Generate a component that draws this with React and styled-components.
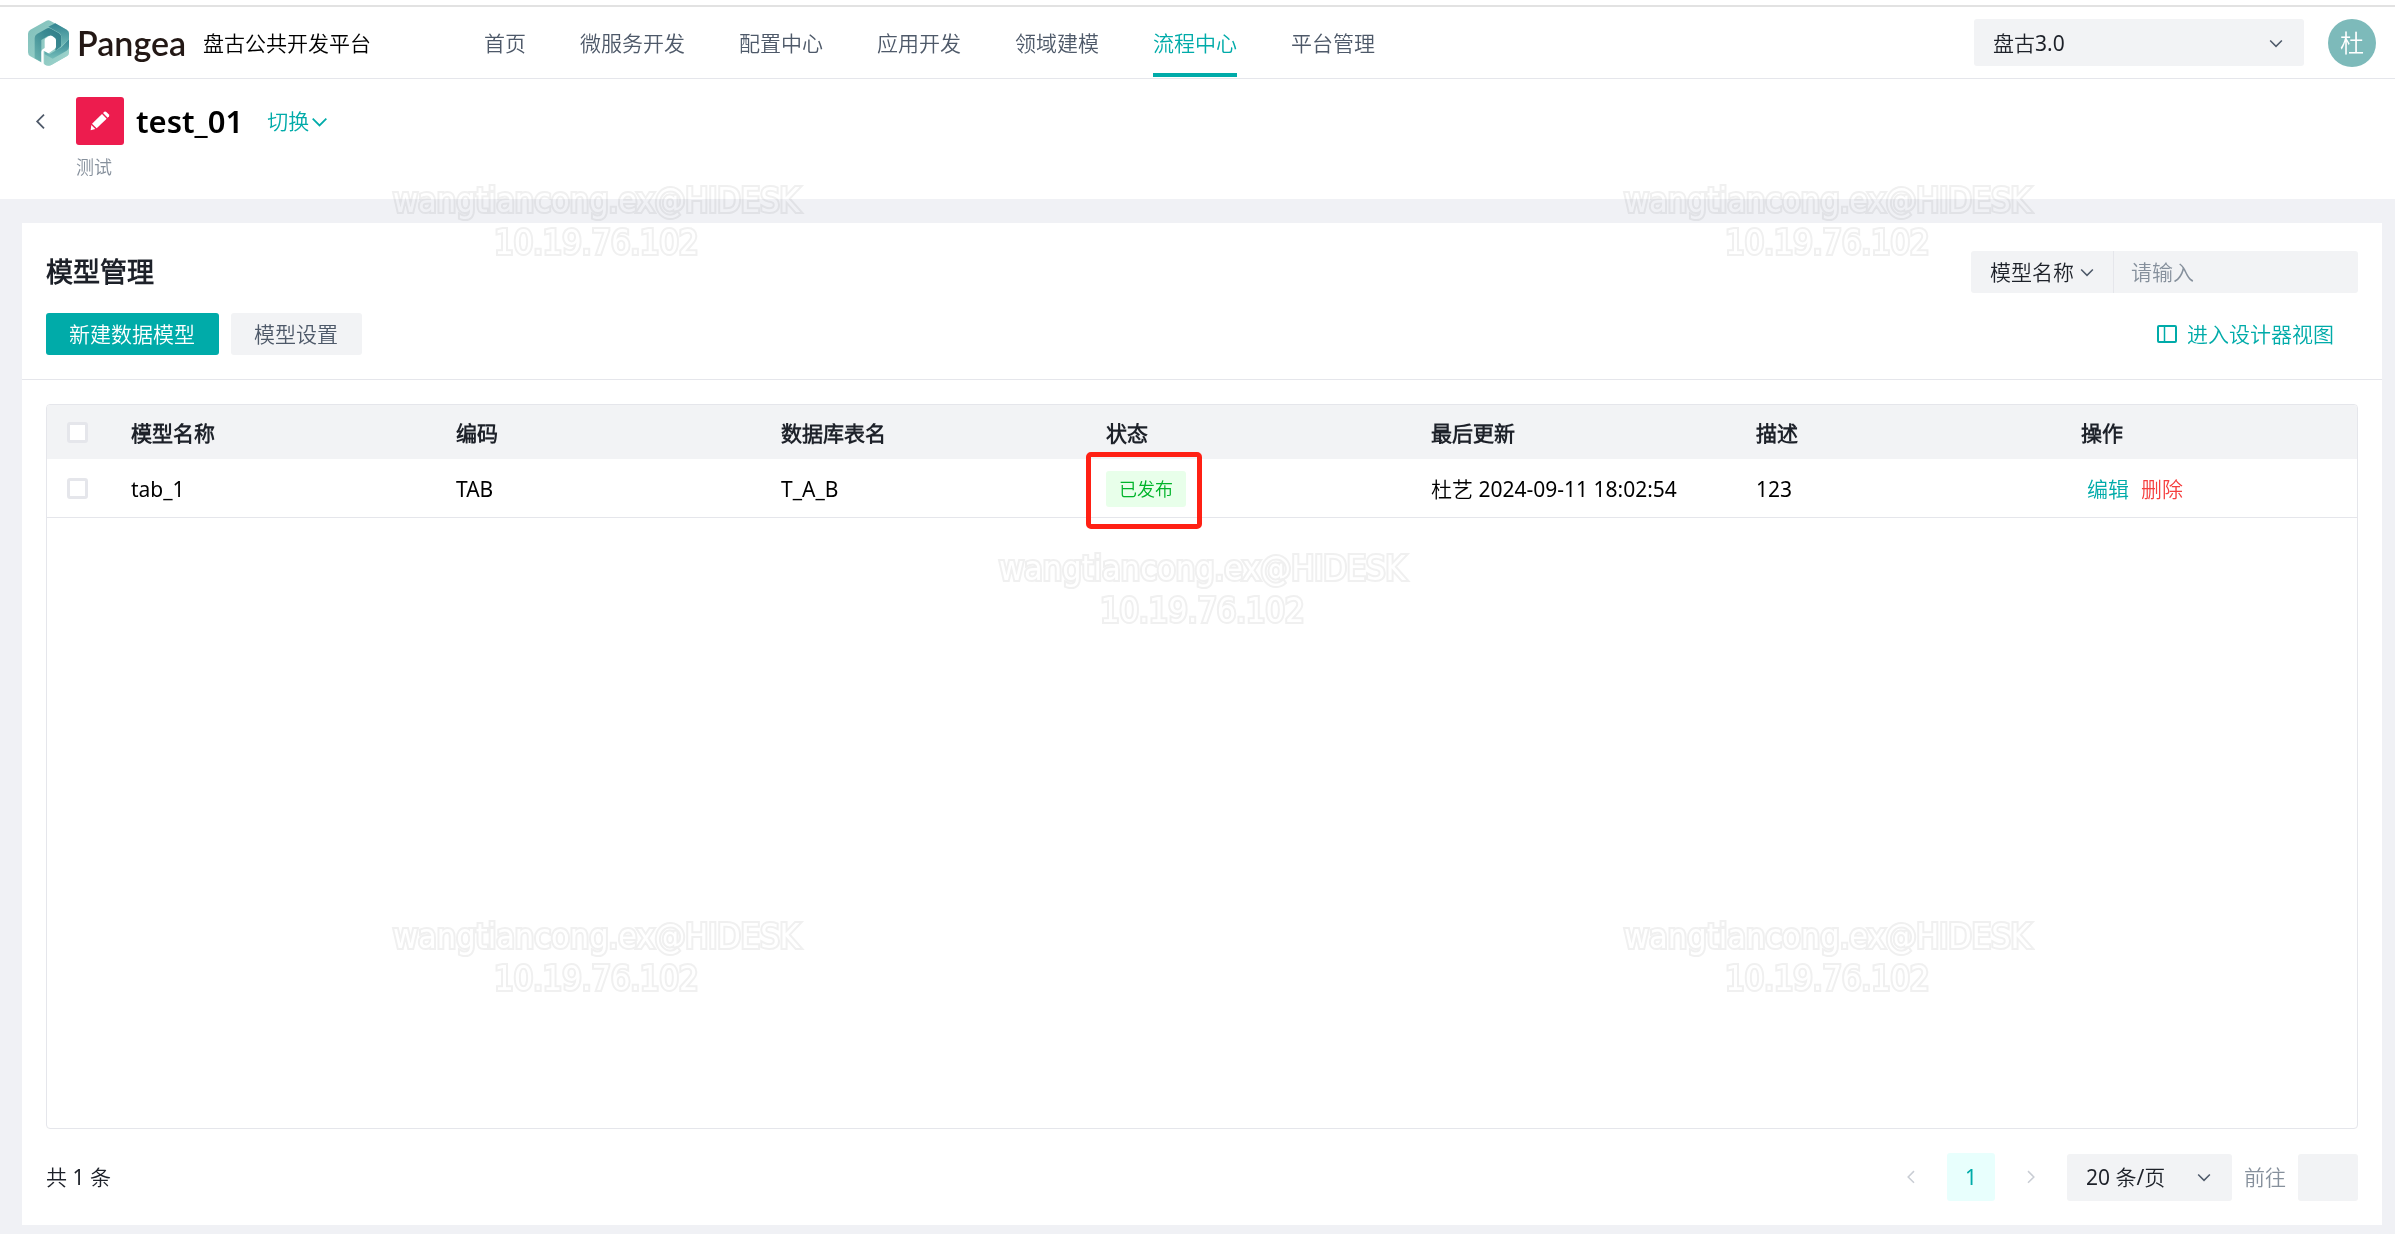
import React, { useState } from "react";
import styled, { createGlobalStyle } from "styled-components";

const colors = {
  primary: "#00aba9",
  primaryLight: "#e8fffd",
  danger: "#f53f3f",
  text: "#1d2129",
  textSecond: "#4e5969",
  textThird: "#86909c",
  disabled: "#c9cdd4",
  border: "#e5e6eb",
  fill: "#f2f3f5",
  page: "#f0f1f5"
};

const GlobalStyle = createGlobalStyle`
  * {
    box-sizing: border-box;
  }
  body {
    margin: 0;
    background: ${colors.page};
    color: ${colors.text};
    font-family: "Noto Sans", "Noto Sans CJK SC DemiLight", "Noto Sans CJK SC", sans-serif;
    font-size: 21px;
    line-height: 32px;
  }
  button, input, select {
    font: inherit;
    color: inherit;
    border: none;
    margin: 0;
  }
  a {
    text-decoration: none;
  }
`;

const navItems = [
  "首页",
  "微服务开发",
  "配置中心",
  "应用开发",
  "领域建模",
  "流程中心",
  "平台管理"
];

const columns = [
  "模型名称",
  "编码",
  "数据库表名",
  "状态",
  "最后更新",
  "描述",
  "操作"
];

const models = [
  {
    name: "tab_1",
    code: "TAB",
    table: "T_A_B",
    status: "已发布",
    updated: "杜艺 2024-09-11 18:02:54",
    desc: "123"
  }
];

const marks = [
  { left: "24.9%", top: 179 },
  { left: "76.3%", top: 179 },
  { left: "50.2%", top: 547 },
  { left: "24.9%", top: 915 },
  { left: "76.3%", top: 915 }
];

const paths = {
  down: "M39.6 17.443 24.043 33 8.487 17.443",
  left: "M32 8.4 16.444 23.956 32 39.513",
  right: "m16 39.513 15.556-15.557L16 8.4"
};

function Arrow({ to, size = 18, color = "currentColor" }) {
  return (
    <svg
      width={size}
      height={size}
      viewBox="0 0 48 48"
      fill="none"
      stroke={color}
      strokeWidth="4"
      aria-hidden="true"
    >
      <path d={paths[to]} />
    </svg>
  );
}

function LogoMark() {
  return (
    <svg width="41" height="46" viewBox="0 0 123 138" aria-hidden="true">
      <defs>
        <linearGradient id="band" x1="0" y1="1" x2="1" y2="0">
          <stop offset="0" stopColor="#6db5b1" />
          <stop offset="0.6" stopColor="#3b8a92" />
          <stop offset="1" stopColor="#2f7b87" />
        </linearGradient>
        <linearGradient id="side" x1="0" y1="0" x2="0" y2="1">
          <stop offset="0" stopColor="#338592" />
          <stop offset="1" stopColor="#74bdb9" />
        </linearGradient>
        <linearGradient id="face" x1="0" y1="0" x2="1" y2="1">
          <stop offset="0" stopColor="#7fbfba" />
          <stop offset="1" stopColor="#a5d8d0" />
        </linearGradient>
      </defs>
      <path
        d="M54 3q7-4 14 0l48 26q7 4 7 12v56q0 8-7 12l-46 26q-8 4-16 0L7 109q-7-4-7-12V41q0-8 7-12z"
        fill="url(#face)"
      />
      <path
        d="M20 54q0-8 7-12l28-16q7-4 14 0l24 14q7 4 7 12v30L82 92V60L61 47 40 60v66L20 115z"
        fill="url(#band)"
      />
      <path d="M82 10l34 19q7 4 7 12v18L100 82V50q0-7-6-11L61 20z" fill="url(#side)" />
      <path d="M123 58v39q0 8-7 12l-46 26q-10 4-20-1V98l14 8 18-12z" fill="url(#face)" />
      <path d="M123 58v22q0 8-7 12L74 116 50 103v-9l14 9 36-21z" fill="url(#side)" />
      <path d="M50 60q0-4 4-6l9-6q5-3 10 0l7 5q4 3 4 7v20q0 4-4 7L64 98q-4 2-8-1l-9-5v41l-7-4V96q0-5 4-8l6-4z" fill="#fff" />
    </svg>
  );
}

function PencilIcon() {
  return (
    <svg width="48" height="48" viewBox="0 0 144 144" fill="#fff" aria-hidden="true">
      <path d="M78 51l14 14-30 29-14-14z" />
      <path d="M46 84l12 12-14 4z" />
      <path d="M81 48l4-4q3-2 6 1l7 7q3 3 1 6l-4 4z" />
    </svg>
  );
}

function LayoutIcon() {
  return (
    <svg
      width="20"
      height="18"
      viewBox="0 0 20 18"
      fill="none"
      stroke="currentColor"
      strokeWidth="2"
      aria-hidden="true"
    >
      <rect x="1" y="1" width="18" height="16" rx="1" />
      <path d="M7.5 1v16" strokeWidth="1.5" />
    </svg>
  );
}

function TopBar() {
  return (
    <Header>
      <Brand href="#home">
        <LogoMark />
        <BrandName>Pangea</BrandName>
        <BrandTitle>盘古公共开发平台</BrandTitle>
      </Brand>
      <Nav>
        {navItems.map(item => (
          <NavLink key={item} href={`#${item}`} $active={item === "流程中心"}>
            {item}
          </NavLink>
        ))}
      </Nav>
      <SelectBox $width="330px">
        <Select aria-label="版本" defaultValue="3">
          <option value="3">盘古3.0</option>
        </Select>
        <Arrow to="down" color={colors.textSecond} />
      </SelectBox>
      <Avatar>杜</Avatar>
    </Header>
  );
}

function AppInfo() {
  return (
    <Info>
      <BackButton aria-label="返回">
        <Arrow to="left" size={21} />
      </BackButton>
      <div>
        <InfoRow>
          <AppIcon>
            <PencilIcon />
          </AppIcon>
          <AppName>test_01</AppName>
          <SwitchButton>
            切换
            <Arrow to="down" size={21} />
          </SwitchButton>
        </InfoRow>
        <AppDesc>测试</AppDesc>
      </div>
    </Info>
  );
}

function ModelTable() {
  const [selected, setSelected] = useState([]);
  const toggle = name =>
    setSelected(
      selected.includes(name)
        ? selected.filter(n => n !== name)
        : [...selected, name]
    );
  const all = selected.length === models.length;

  return (
    <TableBox>
      <Table>
        <colgroup>
          <CheckCol />
          {columns.slice(0, -1).map(c => (
            <col key={c} />
          ))}
          <ActionCol />
        </colgroup>
        <thead>
          <tr>
            <CheckHead>
              <Checkbox
                aria-label="全选"
                checked={all}
                onChange={() => setSelected(all ? [] : models.map(m => m.name))}
              />
            </CheckHead>
            {columns.map(c => (
              <Th key={c}>{c}</Th>
            ))}
          </tr>
        </thead>
        <tbody>
          {models.map(m => (
            <tr key={m.name}>
              <CheckCell>
                <Checkbox
                  aria-label={m.name}
                  checked={selected.includes(m.name)}
                  onChange={() => toggle(m.name)}
                />
              </CheckCell>
              <Td>{m.name}</Td>
              <Td>{m.code}</Td>
              <Td>{m.table}</Td>
              <Td>
                <Tag>
                  {m.status}
                  <Highlight />
                </Tag>
              </Td>
              <Td>{m.updated}</Td>
              <Td>{m.desc}</Td>
              <Td>
                <ActionLink href="#edit">编辑</ActionLink>
                <ActionLink href="#delete" $danger>
                  删除
                </ActionLink>
              </Td>
            </tr>
          ))}
        </tbody>
      </Table>
    </TableBox>
  );
}

function Pagination() {
  return (
    <Footer>
      <Total>共 {models.length} 条</Total>
      <PageButton aria-label="上一页" disabled>
        <Arrow to="left" />
      </PageButton>
      <PageButton $active>1</PageButton>
      <PageButton aria-label="下一页" disabled>
        <Arrow to="right" />
      </PageButton>
      <SizeBox $width="165px">
        <Select aria-label="每页条数" defaultValue="20">
          <option value="20">20 条/页</option>
        </Select>
        <Arrow to="down" color={colors.textSecond} />
      </SizeBox>
      <JumpLabel>
        前往
        <JumpInput />
      </JumpLabel>
    </Footer>
  );
}

function App() {
  return (
    <Page>
      <GlobalStyle />
      <TopBar />
      <AppInfo />
      <Card>
        <Toolbar>
          <ToolbarRow>
            <Title>模型管理</Title>
            <SearchGroup>
              <FieldBox>
                <FieldSelect aria-label="搜索字段" defaultValue="name">
                  <option value="name">模型名称</option>
                </FieldSelect>
                <Arrow to="down" color={colors.textSecond} />
              </FieldBox>
              <SearchInput aria-label="搜索" placeholder="请输入" />
            </SearchGroup>
          </ToolbarRow>
          <ToolbarRow>
            <Buttons>
              <Button $primary>新建数据模型</Button>
              <Button>模型设置</Button>
            </Buttons>
            <ViewLink href="#designer">
              <LayoutIcon />
              进入设计器视图
            </ViewLink>
          </ToolbarRow>
        </Toolbar>
        <CardBody>
          <ModelTable />
          <Pagination />
        </CardBody>
      </Card>
      <Watermark aria-hidden="true">
        {marks.map(m => (
          <Mark key={m.left + m.top} $left={m.left} $top={m.top}>
            wangtiancong.ex@HIDESK
            <br />
            10.19.76.102
          </Mark>
        ))}
      </Watermark>
    </Page>
  );
}

const Page = styled.div`
  display: flex;
  flex-direction: column;
  min-height: 100vh;
  position: relative;
  border-top: 5px solid #fff;
  padding-bottom: 9px;
`;

const Header = styled.header`
  display: flex;
  align-items: center;
  height: 74px;
  padding: 0 19px 0 28px;
  background: #fff;
  border-top: 2px solid #e2e2e2;
  border-bottom: 1px solid ${colors.border};
`;
const Brand = styled.a`
  display: flex;
  align-items: center;
  width: 456px;
  color: #000;
`;
const BrandName = styled.span`
  width: 126px;
  margin-left: 8px;
  color: #231815;
  font-family: Lato, sans-serif;
  font-size: 34px;
  font-weight: 600;
`;
const BrandTitle = styled.span`
  white-space: nowrap;
`;
const Nav = styled.nav`
  display: flex;
  flex: 1;
  align-self: stretch;
  gap: 54px;
  margin-bottom: 1px;
`;
const NavLink = styled.a`
  display: flex;
  align-items: center;
  padding-top: 6px;
  border-bottom: 4px solid ${props => (props.$active ? colors.primary : "transparent")};
  color: ${props => (props.$active ? colors.primary : colors.textSecond)};
  white-space: nowrap;
`;
const SelectBox = styled.div`
  display: flex;
  align-items: center;
  width: ${props => props.$width};
  height: 47px;
  padding-right: 19px;
  background: ${colors.fill};
  border-radius: 3px;
`;
const Select = styled.select`
  flex: 1;
  min-width: 0;
  height: 100%;
  padding: 0 0 0 19px;
  appearance: none;
  background: transparent;
  outline: none;
`;
const Avatar = styled.div`
  width: 48px;
  height: 48px;
  margin-left: 24px;
  border-radius: 50%;
  background: #7dbaba;
  color: #fff;
  font-size: 24px;
  line-height: 48px;
  text-align: center;
`;

const Info = styled.section`
  display: flex;
  align-items: flex-start;
  gap: 25px;
  height: 120px;
  padding: 18px 30px;
  background: #fff;
`;
const BackButton = styled.button`
  display: flex;
  align-items: center;
  height: 48px;
  padding: 0;
  background: none;
  color: ${colors.textSecond};
`;
const InfoRow = styled.div`
  display: flex;
  align-items: center;
  height: 48px;
`;
const AppIcon = styled.div`
  display: flex;
  border-radius: 3px;
  background: #ed1c4e;
`;
const AppName = styled.h1`
  margin: 0 24px 0 12px;
  color: #000;
  font-size: 31px;
  font-weight: 600;
`;
const SwitchButton = styled.button`
  display: flex;
  align-items: center;
  padding: 0;
  background: none;
  color: ${colors.primary};
`;
const AppDesc = styled.div`
  margin-top: 6px;
  color: ${colors.textThird};
  font-size: 18px;
`;

const Card = styled.main`
  display: flex;
  flex: 1;
  flex-direction: column;
  margin: 24px 13px 0 22px;
  background: #fff;
`;
const Toolbar = styled.div`
  display: flex;
  flex-direction: column;
  gap: 20px;
  padding: 28px 24px 24px;
  border-bottom: 1px solid ${colors.border};
`;
const ToolbarRow = styled.div`
  display: flex;
  align-items: center;
  justify-content: space-between;
`;
const Title = styled.h2`
  margin: 0;
  font-size: 27px;
  font-weight: 700;
`;
const SearchGroup = styled.div`
  display: flex;
  height: 42px;
  overflow: hidden;
  background: ${colors.fill};
  border-radius: 3px;
`;
const FieldBox = styled.div`
  display: flex;
  align-items: center;
  width: 143px;
  border-right: 1px solid ${colors.border};
`;
const FieldSelect = styled(Select)`
  flex: none;
  width: 107px;
`;
const SearchInput = styled.input`
  width: 244px;
  padding: 0 17px;
  background: transparent;
  outline: none;
  &::placeholder {
    color: ${colors.textThird};
  }
`;
const Buttons = styled.div`
  display: flex;
  gap: 12px;
`;
const Button = styled.button`
  height: 42px;
  padding: 0 24px 0 23px;
  border-radius: 3px;
  background: ${props => (props.$primary ? colors.primary : colors.fill)};
  color: ${props => (props.$primary ? "#fff" : colors.textSecond)};
`;
const ViewLink = styled.a`
  display: flex;
  align-items: center;
  gap: 10px;
  padding-right: 24px;
  color: ${colors.primary};
`;

const CardBody = styled.div`
  display: flex;
  flex: 1;
  flex-direction: column;
  padding: 24px;
`;
const TableBox = styled.div`
  flex: 1;
  border: 1px solid ${colors.border};
  border-radius: 4px;
  overflow: hidden;
`;
const Table = styled.table`
  width: 100%;
  border-collapse: separate;
  border-spacing: 0;
  table-layout: fixed;
`;
const CheckCol = styled.col`
  width: 60px;
`;
const ActionCol = styled.col`
  width: 300px;
`;
const Th = styled.th`
  height: 54px;
  padding: 2px 24px 0;
  background: ${colors.fill};
  font-weight: 700;
  text-align: left;
`;
const Td = styled.td`
  height: 59px;
  padding: 2px 24px 0;
  border-bottom: 1px solid ${colors.border};
  color: #000;
  white-space: nowrap;
`;
const CheckHead = styled(Th)`
  padding: 0 20px;
`;
const CheckCell = styled(Td)`
  padding: 0 20px;
`;
const Checkbox = styled.input.attrs({ type: "checkbox" })`
  display: block;
  width: 21px;
  height: 21px;
  appearance: none;
  background: #fff;
  border: 3px solid ${colors.border};
  border-radius: 3px;
  &:checked {
    background: ${colors.primary};
  }
`;
const Tag = styled.span`
  display: inline-block;
  position: relative;
  height: 36px;
  padding: 0 13px;
  border-radius: 3px;
  background: #e8ffea;
  color: #00b42a;
  font-size: 18px;
  line-height: 36px;
  vertical-align: middle;
`;
const Highlight = styled.span`
  position: absolute;
  inset: -19px -16px -22px -20px;
  border: 5px solid #ff2014;
  border-radius: 5px;
  pointer-events: none;
  z-index: 1;
`;
const ActionLink = styled.a`
  padding: 0 6px;
  color: ${props => (props.$danger ? colors.danger : colors.primary)};
`;

const Footer = styled.div`
  display: flex;
  align-items: center;
  margin-top: 24px;
`;
const Total = styled.span`
  flex: 1;
`;
const PageButton = styled.button`
  display: flex;
  align-items: center;
  justify-content: center;
  width: 48px;
  height: 48px;
  margin-right: 12px;
  padding: 0;
  border-radius: 3px;
  background: ${props => (props.$active ? colors.primaryLight : "none")};
  color: ${props => (props.$active ? colors.primary : colors.textSecond)};
  &:disabled {
    color: ${colors.disabled};
  }
`;
const SizeBox = styled(SelectBox)`
  margin-right: 12px;
`;
const JumpLabel = styled.label`
  display: flex;
  align-items: center;
  gap: 12px;
  color: ${colors.textThird};
`;
const JumpInput = styled.input`
  width: 60px;
  height: 47px;
  padding: 0 12px;
  border-radius: 3px;
  background: ${colors.fill};
  outline: none;
`;

const Watermark = styled.div`
  position: absolute;
  inset: -5px 0 0;
  overflow: hidden;
  pointer-events: none;
  mix-blend-mode: multiply;
`;
const Mark = styled.div`
  position: absolute;
  left: ${props => props.$left};
  top: ${props => props.$top}px;
  transform: translateX(-50%);
  color: #fff;
  font-family: "DejaVu Sans Condensed", "DejaVu Sans", sans-serif;
  font-size: 34px;
  line-height: 42px;
  text-align: center;
  white-space: nowrap;
  paint-order: stroke fill;
  -webkit-text-stroke: 4px #f0f0f0;
`;

export default App;
